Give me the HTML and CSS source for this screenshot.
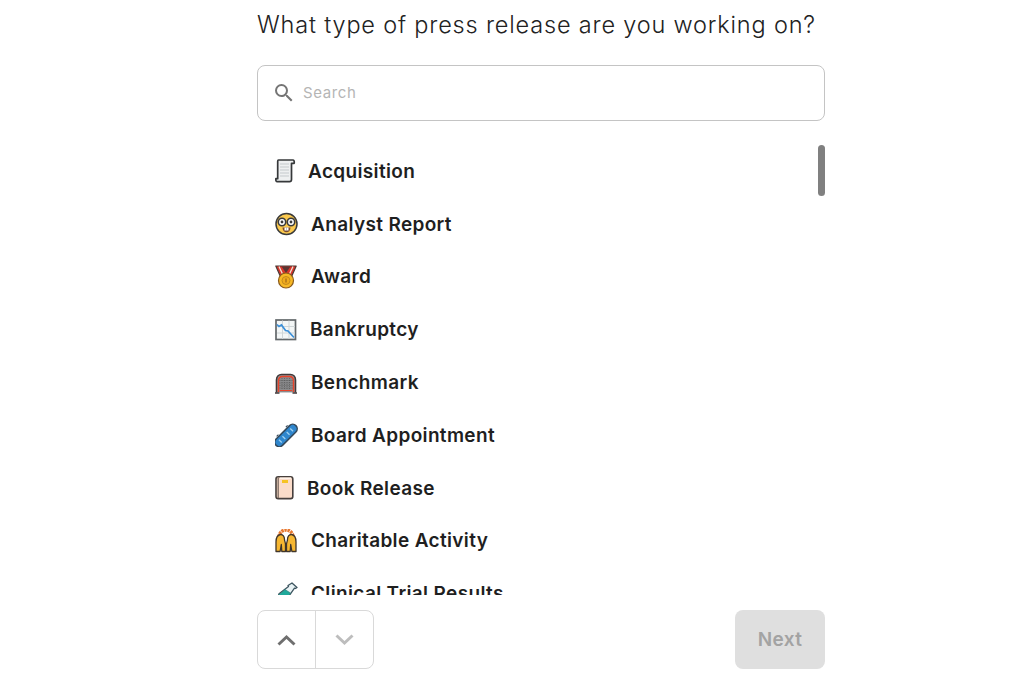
FILE: index.html
```html
<!DOCTYPE html>
<html lang="en">
<head>
  <meta charset="UTF-8" />
  <meta name="viewport" content="width=device-width, initial-scale=1.0"/>
  <title>Press Release Type</title>
  <link rel="stylesheet" href="styles.css">
</head>
<body>
  <div class="container">
    <h1>What type of press release are you working on?</h1>

    <div class="search">
      <svg class="search-icon" width="24" height="24" viewBox="0 0 24 24"><path d="M15.500 14h-.79l-.28-.27A6.470 6.470 0 0 0 16 9.500 6.500 6.500 0 1 0 9.500 16c1.610 0 3.090-.59 4.230-1.570l.27.28v.79l5 4.990L20.490 19l-4.990-5zm-6 0C7.010 14 5 11.990 5 9.500S7.010 5 9.500 5 14 7.010 14 9.500 11.990 14 9.500 14z"/></svg>
      <input type="text" placeholder="Search" aria-label="Search">
    </div>

    <div class="list-wrap">
      <ul class="list">
        <li class="row">
          <svg width="21" height="24" viewBox="0 0 21 24"><path d="M3.500 1h14.300c1.200 0 1.600 1 1.400 3.300h-2.700V20.500c0 1.500-.7 2.200-2 2.200H2.300c-1.200 0-1.600-.9-1.400-3h1.800V2.500c0-1 .2-1.500.8-1.500z" fill="#eef0f1" stroke="#36383a" stroke-width="1.700" stroke-linejoin="round"/><path d="M5 5h9M5 8h9M5 11h9M5 14h9M5 17h9" stroke="#c4c9cc" stroke-width="1"/></svg>
          <span>Acquisition</span>
        </li>
        <li class="row">
          <svg width="24" height="24" viewBox="0 0 24 24"><circle cx="11.500" cy="12" r="10.500" fill="#fbc94e" stroke="#3a3a3a" stroke-width="1.500"/><circle cx="7" cy="10" r="3.700" fill="#fff" stroke="#3a3a3a" stroke-width="1.600"/><circle cx="16" cy="10" r="3.700" fill="#fff" stroke="#3a3a3a" stroke-width="1.600"/><circle cx="7" cy="10" r="1.400" fill="#3a3a3a"/><circle cx="16" cy="10" r="1.400" fill="#3a3a3a"/><path d="M7.500 15.500h8c0 3-1.800 4.800-4 4.800s-4-1.800-4-4.800z" fill="#7a4a2c"/><path d="M9.500 15.500h4v3h-4z" fill="#fff"/><path d="M11.500 15.500v3" stroke="#999" stroke-width=".6"/></svg>
          <span>Analyst Report</span>
        </li>
        <li class="row">
          <svg width="24" height="24" viewBox="0 0 24 24"><path d="M.8 1h20.400L15.500 14h-9z" fill="#d9352c" stroke="#4a3a35" stroke-width="1.200" stroke-linejoin="round"/><path d="M6.500 1.500h9L11 8z" fill="#5a3532"/><path d="M4 1.500l4.500 9.500M18 1.500l-4.500 9.500" stroke="#f1e3d3" stroke-width="1.300"/><circle cx="11" cy="15.500" r="7.500" fill="#f7b825" stroke="#8a5a1a" stroke-width="1.200"/><circle cx="11" cy="15.500" r="4" fill="#f0aa1c" stroke="#c28a1e" stroke-width="1"/><path d="M11 13.500v4" stroke="#8a5a1a" stroke-width="1"/></svg>
          <span>Award</span>
        </li>
        <li class="row">
          <svg width="23" height="24" viewBox="0 0 23 24"><rect x="1" y="2" width="19.500" height="19.500" fill="#f3f6f6" stroke="#62676a" stroke-width="1.700"/><path d="M2 8.500h18M2 15h18M7.500 2.500v18.500M14 2.500v18.500" stroke="#cfd6d8" stroke-width="1"/><path d="M2 6.500l2 2 2.500-1.500 4 5.500 2.500.500 6 6.500" fill="none" stroke="#3b8fd8" stroke-width="1.700"/></svg>
          <span>Bankruptcy</span>
        </li>
        <li class="row">
          <svg width="24" height="24" viewBox="0 0 24 24"><path d="M1.500 21.500V9c0-3 2-5.500 5-5.500h9c3 0 5 2.500 5 5.500v12.500" fill="#9a9a9c" stroke="#40393a" stroke-width="1.600"/><path d="M3.500 21V10c0-2.500 1.500-4.500 4-4.500h7c2.500 0 4 2 4 4.500v11" fill="#8a8a8c" stroke="#e8452c" stroke-width="1.500"/><path d="M4.500 9.500h13M4.500 12h13M4.500 14.500h13M4.500 17h13M7 7v12M9.500 7v12M12 7v12M14.500 7v12" stroke="#4d4d4f" stroke-width=".6" stroke-dasharray="1 1"/><path d="M5 19.500h12" stroke="#e8452c" stroke-width="1"/><path d="M0 22h4.500M17.500 22H22" stroke="#40393a" stroke-width="1.500"/></svg>
          <span>Benchmark</span>
        </li>
        <li class="row">
          <svg width="24" height="24" viewBox="0 0 24 24"><g transform="rotate(-45 11 12.500)"><rect x="-3" y="8" width="28" height="9" rx="4.500" fill="#2f86cd" stroke="#34485a" stroke-width="1.500"/><path d="M3 10.500v4M8 10.500v4M14 10.500v4M19 10.500v4" stroke="#9fd0f0" stroke-width="1.300"/><path d="M5 7v-1M18 7v-1" stroke="#34485a" stroke-width="2.500"/></g></svg>
          <span>Board Appointment</span>
        </li>
        <li class="row">
          <svg width="20" height="24" viewBox="0 0 20 24"><rect x="1" y=".8" width="16.800" height="21.800" rx="2.200" fill="#fbdcc9" stroke="#463f3c" stroke-width="1.600"/><path d="M3.200 1.500v20.500" stroke="#7a6a60" stroke-width="1.300"/><path d="M5 1.500h11v1.500H5z" fill="#fff2e8"/><rect x="7" y="4" width="6" height="3" fill="#f6c324"/></svg>
          <span>Book Release</span>
        </li>
        <li class="row">
          <svg width="24" height="24" viewBox="0 0 24 24"><path d="M4 8a7 7 0 0 1 14 0" fill="none" stroke="#e8772e" stroke-width="3.500" stroke-dasharray="2.400 .7"/><path d="M1 22.500V13c0-3.500 1.500-7 4.500-7.500 2.500-.2 4 2.500 4 5 0 1.500 1 3 1 5v7H6.800l-.5-7-1.200 7z" fill="#f7b731" stroke="#40352a" stroke-width="1.300" stroke-linejoin="round"/><path d="M21 22.500V13c0-3.500-1.500-7-4.500-7.500-2.500-.2-4 2.500-4 5 0 1.500-1 3-1 5v7h3.700l.5-7 1.200 7z" fill="#f7b731" stroke="#40352a" stroke-width="1.300" stroke-linejoin="round"/></svg>
          <span>Charitable Activity</span>
        </li>
        <li class="row">
          <svg width="24" height="24" viewBox="0 0 24 24"><path d="M17 1l5 4.500-1.500 1-1-.3-6 8.500c-1.500 2-3.500 3-6.500 2.500-3-1-4-3-3-5.500L13.500 4.500 13 3.500z" fill="#e9f3f5" stroke="#3d5560" stroke-width="1.300" stroke-linejoin="round"/><path d="M10 7.500l5.500 3.500-4 6H3L3.500 13z" fill="#1fa99b" stroke="#2a7a73" stroke-width=".6"/></svg>
          <span>Clinical Trial Results</span>
        </li>
      </ul>
      <div class="scroll-thumb"></div>
    </div>

    <div class="footer">
      <div class="stepper">
        <button class="step" aria-label="Previous">
          <svg width="20" height="12" viewBox="0 0 20 12"><path d="M1.500 10.500 9.500 3l8 7.500" fill="none" stroke="#6f6f6f" stroke-width="3"/></svg>
        </button>
        <button class="step" aria-label="Next item">
          <svg width="20" height="12" viewBox="0 0 20 12"><path d="M1.500 1.500 9.500 9l8-7.500" fill="none" stroke="#bdbdbd" stroke-width="3"/></svg>
        </button>
      </div>
      <button class="next" disabled>Next</button>
    </div>
  </div>
</body>
</html>
```

FILE: styles.css
```css
* {
  box-sizing: border-box;
}

html, body {
  height: 100%;
}

body {
  margin: 0;
  font-family: Inter, 'Noto Sans', sans-serif;
  background-color: white;
  color: #222;
  overflow: hidden;
}

.container {
  width: 568px;
  margin-left: 257px;
  padding-top: 10px;
}

h1 {
  margin: 0;
  font-size: 23.500px;
  line-height: 29px;
  font-weight: 300;
  letter-spacing: .82px;
  white-space: nowrap;
  color: #222;
}

.search {
  display: flex;
  align-items: center;
  gap: 5px;
  height: 56px;
  margin-top: 26px;
  padding-left: 14px;
  border: 1px solid #c4c4c4;
  border-radius: 8px;
}

.search-icon {
  flex: none;
  fill: #757575;
}

.search input {
  flex: 1;
  border: none;
  outline: none;
  padding-bottom: 2px;
  font-family: inherit;
  font-size: 15px;
  letter-spacing: .6px;
  color: #333;
}

.search input::placeholder {
  color: #b5b5b5;
}

.list-wrap {
  position: relative;
  height: 474px;
  overflow: hidden;
}

.list {
  list-style: none;
  margin: 0;
  padding: 24px 0 0 18px;
}

.row {
  display: flex;
  align-items: center;
  gap: 12px;
  height: 52.800px;
  font-size: 19px;
  font-weight: 600;
  letter-spacing: .35px;
  color: #1f1f1f;
}

.row svg {
  flex: none;
}

.scroll-thumb {
  position: absolute;
  top: 24px;
  right: 0;
  width: 7px;
  height: 51px;
  border-radius: 4px;
  background-color: #808080;
}

.footer {
  display: flex;
  justify-content: space-between;
  align-items: center;
  margin-top: 15px;
}

.stepper {
  display: flex;
  height: 59px;
  border: 1px solid #d9d9d9;
  border-radius: 8px;
}

.step {
  display: flex;
  align-items: center;
  justify-content: center;
  width: 57px;
  padding: 0;
  border: none;
  background: none;
}

.step + .step {
  width: 58px;
  border-left: 1px solid #d9d9d9;
}

.next {
  width: 90px;
  height: 59px;
  border: none;
  border-radius: 8px;
  background-color: #dfdfdf;
  font-family: inherit;
  font-size: 19px;
  font-weight: 600;
  letter-spacing: .4px;
  color: #a3a3a3;
}
```
